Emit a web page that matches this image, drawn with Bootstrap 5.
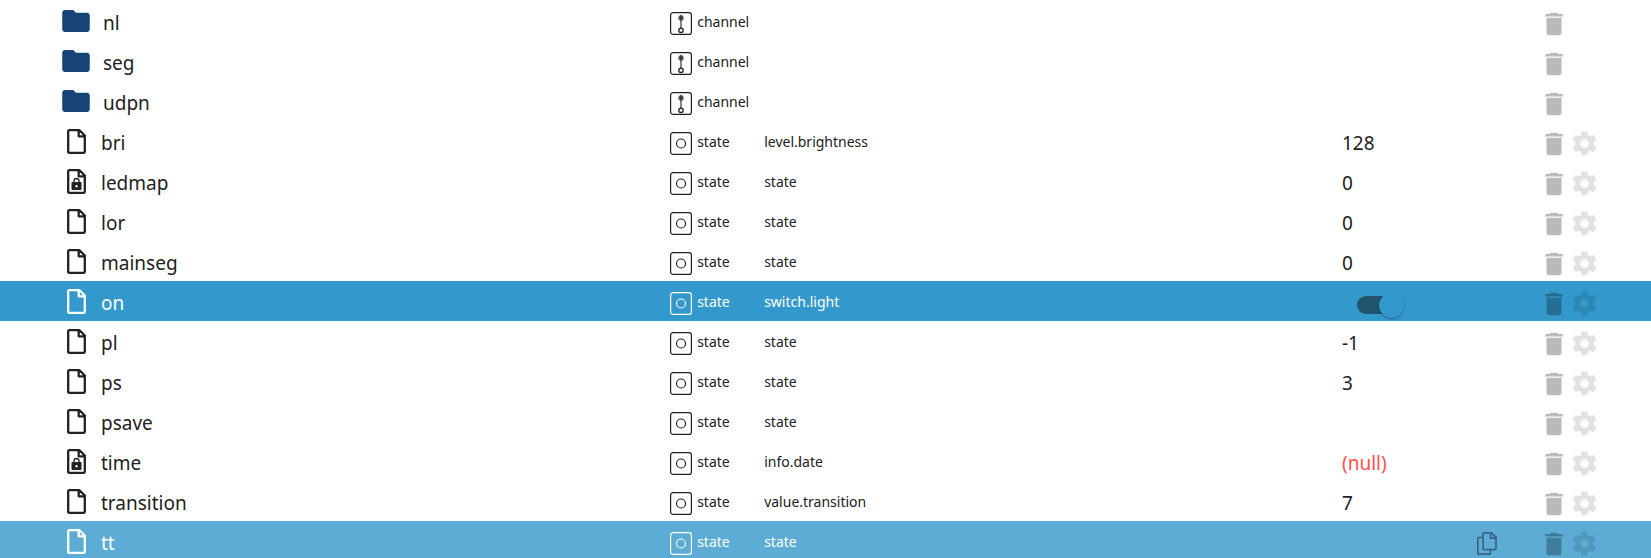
<!DOCTYPE html>
<html lang="en">
<head>
<meta charset="utf-8">
<meta name="viewport" content="width=device-width, initial-scale=1">
<title>Objects</title>
<link href="https://cdn.jsdelivr.net/npm/bootstrap@5.3.0/dist/css/bootstrap.min.css" rel="stylesheet">
<style>
body { font-family: "Noto Sans", "Open Sans", sans-serif; color: #212121; background: #fff; }
main { padding-top: 1px; }
.tree { table-layout: fixed; width: 100%; border-collapse: collapse; }
.tree tr { height: 40px; }
.tree td { padding: 0; height: 40px; }
.col-type { width: 94px; }
.col-role { width: 35%; }
.col-value { width: 130px; }
.col-actions { width: 179px; }
.cell { height: 40px; }
.cell-name { padding-left: 62px; font-size: 19px; line-height: 24px; }
.cell-value { font-size: 19px; line-height: 24px; }
.cell-small { padding-top: 2px; font-size: 14px; line-height: 20px; }
.name-icon { width: 28px; height: 25px; }
.folder { color: #164477; padding-top: 1px; }
.gap-folder { gap: 13px; }
.gap-file { gap: 11px; }
.gap-type { gap: 5px; }
.type-icon { padding-top: 2px; }
.cell-actions { padding: 5px 52px 0 0; }
.act { width: 30px; height: 30px; padding: 0; border: 0; background: none; color: #000; line-height: 0; }
.act-copy { opacity: .4; }
.act-delete { opacity: .27; }
.act-config { opacity: .11; }
.null { color: #ff4f4f; }
.selected { background: #3399cc; color: #fff; }
.hovered { background: #5cacd6; color: #fff; }
.toggle { appearance: none; position: relative; width: 47px; height: 25px; margin: 8px 0 0 15px; }
.toggle::before { content: ""; position: absolute; left: 0; top: 3px; width: 40px; height: 18px; border-radius: 9px; background: #21556d; }
.toggle::after { content: ""; position: absolute; right: 0; top: 0; width: 25px; height: 25px; border-radius: 50%; background: #3399cc; box-shadow: 0 1px 2px rgba(0,0,0,.35); }
</style>
</head>
<body>
<svg class="d-none" aria-hidden="true">
  <symbol id="i-folder" viewBox="2 4 20 16"><path fill="currentColor" d="M10 4H4c-1.1 0-2 .9-2 2v12c0 1.1.9 2 2 2h16c1.1 0 2-.9 2-2V8c0-1.1-.9-2-2-2h-8z"/></symbol>
  <symbol id="i-file" viewBox="0 0 19 25"><path fill="none" stroke="currentColor" stroke-width="2.300" stroke-linejoin="round" d="M2.200 1.200h10.300l5.300 5.300V22.800q0 1-1 1H2.200q-1 0-1-1V2.200q0-1 1-1zM11.700 1.200v6.100H17.800"/></symbol>
  <symbol id="i-lock" viewBox="0 0 19 25"><path fill="none" stroke="currentColor" stroke-width="2.300" stroke-linejoin="round" d="M2.200 1.200h10.300l5.300 5.300V22.800q0 1-1 1H2.200q-1 0-1-1V2.200q0-1 1-1zM11.700 1.200v6.100H17.800"/><path fill="none" stroke="currentColor" stroke-width="1.300" d="M7 13.500v-1.500a2.500 2.500 0 0 1 5 0v1.500"/><path fill="currentColor" fill-rule="evenodd" d="M5.500 13h8q1 0 1 1v6q0 1-1 1h-8q-1 0-1-1v-6q0-1 1-1zM9.500 16a1.200 1.200 0 1 0 0 2.400 1.200 1.200 0 0 0 0-2.400z"/></symbol>
  <symbol id="i-channel" viewBox="0 0 22 23"><g fill="none" stroke="currentColor"><rect x=".6" y=".6" width="20.800" height="21.800" rx="2.500" stroke-width="1.200"/><circle cx="11" cy="18.300" r="2.200" stroke-width="1.300"/><path d="M11 16V3" stroke-width="1.100"/></g><circle cx="11" cy="6" r="2.700" fill="currentColor" opacity=".75"/></symbol>
  <symbol id="i-state" viewBox="0 0 22 23"><g fill="none" stroke="currentColor"><rect x=".6" y=".6" width="20.800" height="21.800" rx="2.500" stroke-width="1.200"/><circle cx="11" cy="11.500" r="4.500" stroke-width="1.200"/></g></symbol>
  <symbol id="i-delete" viewBox="0 0 24 24"><path fill="currentColor" d="M6 19c0 1.100.9 2 2 2h8c1.100 0 2-.9 2-2V7H6v12zM19 4h-3.500l-1-1h-5l-1 1H5v2h14V4z"/></symbol>
  <symbol id="i-config" viewBox="0 0 24 24"><path fill="currentColor" d="M19.430 12.980c.04-.32.07-.64.07-.98s-.03-.66-.07-.98l2.110-1.650c.19-.15.24-.42.12-.64l-2-3.460c-.12-.22-.39-.3-.61-.22l-2.490 1c-.52-.4-1.080-.73-1.690-.98l-.38-2.650C14.460 2.180 14.250 2 14 2h-4c-.25 0-.46.18-.49.42l-.38 2.650c-.61.25-1.170.59-1.690.98l-2.490-1c-.23-.09-.49 0-.61.22l-2 3.460c-.13.22-.07.49.12.64l2.110 1.650c-.04.32-.07.65-.07.98s.03.66.07.98l-2.110 1.650c-.19.15-.24.42-.12.64l2 3.460c.12.22.39.3.61.22l2.490-1c.52.4 1.080.73 1.690.98l.38 2.650c.03.24.24.42.49.42h4c.25 0 .46-.18.49-.42l.38-2.650c.61-.25 1.170-.59 1.690-.98l2.490 1c.23.09.49 0 .61-.22l2-3.460c.12-.22.07-.49-.12-.64zM12 15.500a3.500 3.500 0 1 1 0-7 3.500 3.500 0 0 1 0 7z"/></symbol>
  <symbol id="i-copy" viewBox="0 0 20 23"><path fill="none" stroke="currentColor" stroke-width="1.700" stroke-linejoin="round" d="M5.500 5.500H1.700q-.9 0-.9.900v14.900q0 .9.900.9h10.800q.9 0 .9-.9V18M7 .8h7.500l4.500 4.500v11.500q0 .9-.9.900H7q-.9 0-.9-.9V1.700q0-.9.900-.9zM13.500 1v5.200h5.300"/></symbol>
</svg>

<main class="vh-100 overflow-hidden">
  <table class="tree">
    <colgroup><col><col class="col-type"><col class="col-role"><col class="col-value"><col class="col-actions"></colgroup>
    <tbody id="rows"></tbody>
  </table>
</main>

<script src="https://cdn.jsdelivr.net/npm/bootstrap@5.3.0/dist/js/bootstrap.bundle.min.js"></script>
<script>
const objects = [
  { name: 'nl', icon: 'folder', type: 'channel' },
  { name: 'seg', icon: 'folder', type: 'channel' },
  { name: 'udpn', icon: 'folder', type: 'channel' },
  { name: 'bri', role: 'level.brightness', value: '128' },
  { name: 'ledmap', icon: 'lock', role: 'state', value: '0' },
  { name: 'lor', role: 'state', value: '0' },
  { name: 'mainseg', role: 'state', value: '0' },
  { name: 'on', role: 'switch.light', toggle: true, row: 'selected' },
  { name: 'pl', role: 'state', value: '-1' },
  { name: 'ps', role: 'state', value: '3' },
  { name: 'psave', role: 'state' },
  { name: 'time', icon: 'lock', role: 'info.date', value: '(null)' },
  { name: 'transition', role: 'value.transition', value: '7' },
  { name: 'tt', role: 'state', row: 'hovered', copy: true }
];
const svg = (id, w, h) => `<svg width="${w}" height="${h}" aria-hidden="true"><use href="#i-${id}"/></svg>`;
const button = (id, label, w, h) =>
  `<button type="button" class="act act-${id} d-flex align-items-center justify-content-center${id === 'copy' ? ' me-auto' : ''}" aria-label="${label}">${svg(id, w, h)}</button>`;

document.getElementById('rows').innerHTML = objects.map(o => {
  const { icon = 'file', type = 'state', role = '', value = '' } = o;
  const folder = icon === 'folder';
  const shown = o.toggle
    ? '<input type="checkbox" class="toggle" role="switch" aria-label="on" checked>'
    : `<span class="pt-1${value === '(null)' ? ' null' : ''}">${value}</span>`;
  return `<tr class="${o.row || ''}">
    <td><div class="cell cell-name d-flex align-items-center ${folder ? 'gap-folder' : 'gap-file'}">
      <span class="name-icon d-flex justify-content-center ${folder ? 'folder' : ''}">${folder ? svg(icon, 28, 22) : svg(icon, 19, 25)}</span>
      <span class="pt-1">${o.name}</span></div></td>
    <td><div class="cell cell-small d-flex align-items-center gap-type"><span class="type-icon d-flex">${svg(type, 22, 23)}</span><span>${type}</span></div></td>
    <td><div class="cell cell-small d-flex align-items-center">${role}</div></td>
    <td><div class="cell cell-value d-flex align-items-center">${shown}</div></td>
    <td><div class="cell cell-actions d-flex align-items-center justify-content-end">
      ${o.copy ? button('copy', 'Copy', 20, 23) : ''}${button('delete', 'Delete', 30, 30)}${folder ? '<span class="act"></span>' : button('config', 'Settings', 29, 29)}
    </div></td></tr>`;
}).join('');
</script>
</body>
</html>
